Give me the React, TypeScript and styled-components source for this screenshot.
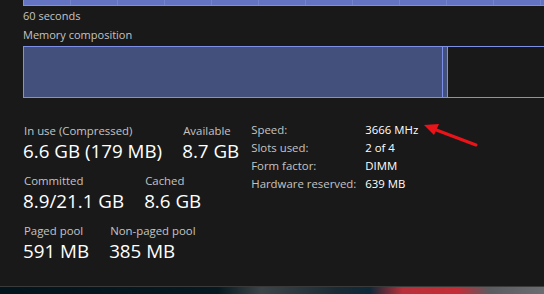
import { Fragment, ReactElement } from "react";
import styled, { createGlobalStyle } from "styled-components";

const GlobalStyle = createGlobalStyle`
  html, body {
    margin: 0;
    padding: 0;
    background: #191919;
  }
  body {
    font-family: "Open Sans", "Noto Sans", sans-serif;
  }
`;

const Window = styled.div`
  display: flex;
  flex-direction: column;
  width: 544px;
  height: 294px;
  overflow: hidden;
  background: #191919;
`;

const Panel = styled.div`
  display: flex;
  flex-direction: column;
  height: 287px;
  padding-left: 23px;
  box-sizing: border-box;
  border-bottom: 1px solid #3a3a3a;
`;

const UsageGraph = styled.div`
  display: flex;
  height: 5px;
  background: #6474c2;
  border-left: 1px solid #7d8fe6;
  border-bottom: 1px solid #7d8fe6;
  background-image: repeating-linear-gradient(
    to right,
    transparent 0,
    transparent 46px,
    #7383cc 46px,
    #7383cc 47px
  );
`;

const Caption = styled.div<{ $gap: number }>`
  color: #c4c4c4;
  font-size: 11px;
  line-height: 14px;
  height: 14px;
  margin-top: ${props => props.$gap}px;
`;

const CompositionBar = styled.div`
  display: flex;
  height: 52px;
  margin-top: 4px;
  border: 1px solid #7d8fe6;
  border-right: none;
  box-sizing: border-box;
`;

const Segment = styled.div<{ $width: number; $fill: string }>`
  width: ${props => props.$width}px;
  flex-shrink: 0;
  background: ${props => props.$fill};
  border-right: 1px solid #7d8fe6;
`;

const Stats = styled.div`
  display: flex;
  margin-top: 25px;
`;

const LeftStats = styled.div`
  display: flex;
  flex-direction: column;
  gap: 10px;
`;

const StatRow = styled.div`
  display: flex;
  gap: 20px;
`;

const Stat = styled.div`
  display: flex;
  flex-direction: column;
`;

const StatLabel = styled.div`
  color: #c4c4c4;
  font-size: 11.4px;
  line-height: 16px;
  margin-left: 1px;
`;

const StatValue = styled.div`
  color: #ffffff;
  font-size: 18.8px;
  line-height: 24px;
`;

const InfoGrid = styled.div`
  display: grid;
  grid-template-columns: 114px auto;
  grid-auto-rows: 18px;
  margin-left: 12px;
  margin-top: -2px;
  position: relative;
`;

const InfoLabel = styled.div`
  color: #c4c4c4;
  font-size: 11.4px;
  line-height: 18px;
`;

const InfoValue = styled.div`
  color: #ffffff;
  font-size: 11.4px;
  line-height: 18px;
`;

const Arrow = styled.svg`
  position: absolute;
  left: 168px;
  top: 3px;
  overflow: visible;
`;

const Wallpaper = styled.div`
  flex: 1;
  background: linear-gradient(
    to right,
    #03141c 0%,
    #061820 40%,
    #3c4448 48%,
    #1a2a34 62%,
    #0e2838 68%,
    #b8303a 74%,
    #c42c36 84%,
    #5a5c60 90%,
    #6a6c70 100%
  );
`;

const stats = [
  [
    { label: "In use (Compressed)", value: "6.6 GB (179 MB)" },
    { label: "Available", value: "8.7 GB" },
  ],
  [
    { label: "Committed", value: "8.9/21.1 GB" },
    { label: "Cached", value: "8.6 GB" },
  ],
  [
    { label: "Paged pool", value: "591 MB" },
    { label: "Non-paged pool", value: "385 MB" },
  ],
];

const info = [
  ["Speed:", "3666 MHz"],
  ["Slots used:", "2 of 4"],
  ["Form factor:", "DIMM"],
  ["Hardware reserved:", "639 MB"],
];

function App(): ReactElement {
  return (
    <Window>
      <GlobalStyle />
      <Panel>
        <UsageGraph />
        <Caption $gap={3}>60 seconds</Caption>
        <Caption $gap={5}>Memory composition</Caption>
        <CompositionBar>
          <Segment $width={418} $fill="#44507c" />
          <Segment $width={4} $fill="#44507c" />
        </CompositionBar>
        <Stats>
          <LeftStats>
            {stats.map((row, i) => (
              <StatRow key={i}>
                {row.map(s => (
                  <Stat key={s.label}>
                    <StatLabel>{s.label}</StatLabel>
                    <StatValue>{s.value}</StatValue>
                  </Stat>
                ))}
              </StatRow>
            ))}
          </LeftStats>
          <InfoGrid>
            {info.map(([label, value]) => (
              <Fragment key={label}>
                <InfoLabel>{label}</InfoLabel>
                <InfoValue>{value}</InfoValue>
              </Fragment>
            ))}
            <Arrow width="60" height="30" viewBox="0 0 60 30">
              <line x1="57" y1="21" x2="12" y2="4" stroke="#e8141a" strokeWidth="3" strokeLinecap="round" />
              <polygon points="5,1 20,0 15,11" fill="#e8141a" />
            </Arrow>
          </InfoGrid>
        </Stats>
      </Panel>
      <Wallpaper />
    </Window>
  );
}

export default App;
